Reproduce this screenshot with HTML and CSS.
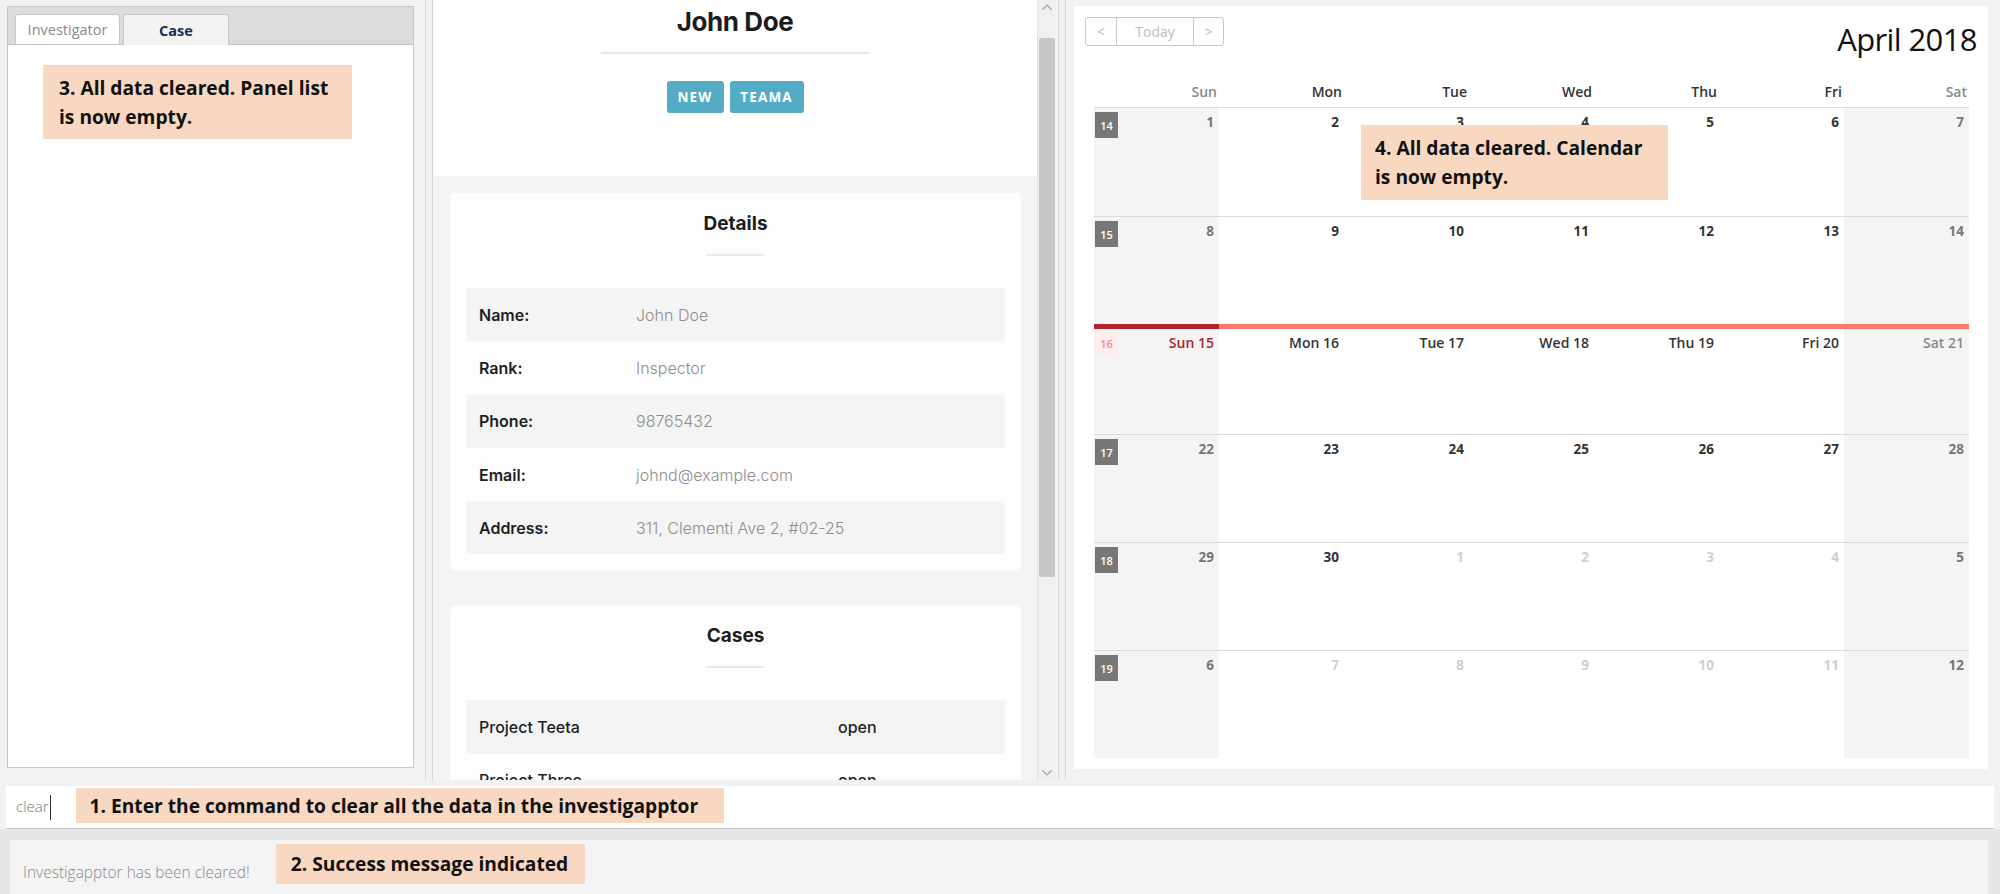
FILE: index.html
```html
<!DOCTYPE html>
<html lang="en">
<head>
<meta charset="utf-8">
<title>Investigapptor</title>
<link rel="stylesheet" href="styles.css">
</head>
<body>
<div class="app">
  <div class="main">
    <section class="left">
      <div class="tabs">
        <div class="tab">Investigator</div>
        <div class="tab active">Case</div>
      </div>
      <div class="list">
        <div class="note note-3">3. All data cleared. Panel list<br>is now empty.</div>
      </div>
    </section>
    <div class="split"></div>
    <section class="middle">
      <div class="detail">
        <header class="profile">
          <h1 class="name">John Doe</h1>
          <div class="rule"></div>
          <div class="tags"><span class="tag">NEW</span><span class="tag">TEAMA</span></div>
        </header>
        <div class="body">
          <div class="card">
            <h2 class="card-title">Details</h2>
            <div class="rule-sm"></div>
            <div class="rows">
              <div class="row"><span class="k">Name:</span><span class="v">John Doe</span></div>
              <div class="row"><span class="k">Rank:</span><span class="v">Inspector</span></div>
              <div class="row"><span class="k">Phone:</span><span class="v">98765432</span></div>
              <div class="row"><span class="k">Email:</span><span class="v">johnd@example.com</span></div>
              <div class="row"><span class="k">Address:</span><span class="v">311, Clementi Ave 2, #02-25</span></div>
            </div>
          </div>
          <div class="card">
            <h2 class="card-title">Cases</h2>
            <div class="rule-sm"></div>
            <div class="rows cases">
              <div class="row"><span class="k">Project Teeta</span><span class="s">open</span></div>
              <div class="row"><span class="k">Project Three</span><span class="s">open</span></div>
            </div>
          </div>
        </div>
      </div>
      <div class="scrollbar">
        <svg class="arrow" width="12" height="8" viewBox="0 0 12 8"><path d="M1.5 6.5 L6 2 L10.5 6.5" fill="none" stroke="#a0a0a0" stroke-width="1.2"/></svg>
        <div class="track"><div class="thumb"></div></div>
        <svg class="arrow" width="12" height="8" viewBox="0 0 12 8"><path d="M1.5 1.5 L6 6 L10.5 1.5" fill="none" stroke="#a0a0a0" stroke-width="1.2"/></svg>
      </div>
    </section>
    <div class="split split-2"></div>
    <section class="calendar">
      <div class="toolbar">
        <div class="nav">
          <span class="btn">&lt;</span><span class="btn today">Today</span><span class="btn">&gt;</span>
        </div>
        <div class="month">April 2018</div>
      </div>
      <div class="grid">
        <div class="dow">
          <span class="wk-end">Sun</span><span>Mon</span><span>Tue</span><span>Wed</span><span>Thu</span><span>Fri</span><span class="wk-end">Sat</span>
        </div>
        <div class="week">
          <div class="cell we"><span class="wn">14</span><span class="d">1</span></div>
          <div class="cell"><span class="d">2</span></div>
          <div class="cell"><span class="d">3</span></div>
          <div class="cell"><span class="d">4</span></div>
          <div class="cell"><span class="d">5</span></div>
          <div class="cell"><span class="d">6</span></div>
          <div class="cell we"><span class="d">7</span></div>
        </div>
        <div class="week">
          <div class="cell we"><span class="wn">15</span><span class="d">8</span></div>
          <div class="cell"><span class="d">9</span></div>
          <div class="cell"><span class="d">10</span></div>
          <div class="cell"><span class="d">11</span></div>
          <div class="cell"><span class="d">12</span></div>
          <div class="cell"><span class="d">13</span></div>
          <div class="cell we"><span class="d">14</span></div>
        </div>
        <div class="week current">
          <div class="cell we first"><span class="wn wn-now">16</span><span class="d today-d">Sun 15</span></div>
          <div class="cell"><span class="d">Mon 16</span></div>
          <div class="cell"><span class="d">Tue 17</span></div>
          <div class="cell"><span class="d">Wed 18</span></div>
          <div class="cell"><span class="d">Thu 19</span></div>
          <div class="cell"><span class="d">Fri 20</span></div>
          <div class="cell we"><span class="d">Sat 21</span></div>
        </div>
        <div class="week">
          <div class="cell we"><span class="wn">17</span><span class="d">22</span></div>
          <div class="cell"><span class="d">23</span></div>
          <div class="cell"><span class="d">24</span></div>
          <div class="cell"><span class="d">25</span></div>
          <div class="cell"><span class="d">26</span></div>
          <div class="cell"><span class="d">27</span></div>
          <div class="cell we"><span class="d">28</span></div>
        </div>
        <div class="week">
          <div class="cell we"><span class="wn">18</span><span class="d">29</span></div>
          <div class="cell"><span class="d">30</span></div>
          <div class="cell other"><span class="d">1</span></div>
          <div class="cell other"><span class="d">2</span></div>
          <div class="cell other"><span class="d">3</span></div>
          <div class="cell other"><span class="d">4</span></div>
          <div class="cell we"><span class="d">5</span></div>
        </div>
        <div class="week">
          <div class="cell we"><span class="wn">19</span><span class="d">6</span></div>
          <div class="cell other"><span class="d">7</span></div>
          <div class="cell other"><span class="d">8</span></div>
          <div class="cell other"><span class="d">9</span></div>
          <div class="cell other"><span class="d">10</span></div>
          <div class="cell other"><span class="d">11</span></div>
          <div class="cell we"><span class="d">12</span></div>
        </div>
      </div>
      <div class="note note-4">4. All data cleared. Calendar<br>is now empty.</div>
    </section>
  </div>
  <div class="command">
    <span class="cmd-text">clear</span><span class="caret"></span>
    <div class="note note-1">1. Enter the command to clear all the data in the investigapptor</div>
  </div>
  <div class="result">
    <div class="result-box">
      <span class="result-text">Investigapptor has been cleared!</span>
      <div class="note note-2">2. Success message indicated</div>
    </div>
  </div>
</div>
</body>
</html>
```

FILE: styles.css
```css
* { box-sizing: border-box; }
html, body { margin: 0; padding: 0; }
body {
  width: 2000px;
  height: 894px;
  overflow: hidden;
  background: #f2f2f2;
  font-family: "Open Sans", "Noto Sans", sans-serif;
  color: #333;
}
.app { display: flex; flex-direction: column; height: 894px; }
.main { display: flex; height: 780px; flex: none; }

/* annotations */
.note {
  background: #f8d8c1;
  color: #111;
  font-family: "Open Sans", sans-serif;
  font-weight: 700;
  font-size: 19.2px;
  line-height: 29px;
  white-space: nowrap;
}

/* left panel */
.left {
  margin: 6px 0 0 7px;
  width: 407px;
  height: 762px;
  border: 1px solid #c9c9c9;
  background: #fff;
  display: flex;
  flex-direction: column;
}
.tabs {
  height: 38px;
  background: #dcdcdc;
  border-bottom: 1px solid #c4c4c4;
  display: flex;
  align-items: flex-end;
  gap: 3px;
  padding-left: 7px;
}
.tab {
  width: 105px;
  height: 30px;
  background: #fff;
  border: 1px solid #c8c8c8;
  border-bottom: none;
  border-radius: 3px 3px 0 0;
  font-size: 14.5px;
  color: #8a8a8a;
  display: flex;
  align-items: center;
  justify-content: center;
}
.tab.active {
  width: 106px;
  height: 31px;
  margin-bottom: -1px;
  background: #f3f3f3;
  color: #142f5b;
  font-weight: 700;
}
.list { flex: 1; padding: 20px 0 0 35px; }
.note-3 { width: 309px; height: 74px; padding: 8px 16px; }

/* split dividers */
.split {
  width: 8px;
  margin-left: 11px;
  background: #f0f0f0;
  border-left: 1px solid #d6d6d6;
  border-right: 1px solid #d6d6d6;
}
.split-2 { margin-left: 2px; margin-right: 8px; }

/* middle detail */
.middle { width: 623px; height: 780px; display: flex; background: #fff; flex: none; }
.detail { width: 604px; height: 780px; overflow: hidden; background: #f4f4f4; font-family: "Inter", "Open Sans", sans-serif; }
.profile {
  background: #fff;
  height: 176px;
  padding-top: 6px;
  display: flex;
  flex-direction: column;
  align-items: center;
}
.name { margin: 0; font-size: 26px; line-height: 32px; font-weight: 700; color: #1c1c1c; letter-spacing: -0.4px; }
.rule { width: 268px; height: 2px; background: #e6e6e6; margin-top: 14px; }
.tags { display: flex; gap: 6px; margin-top: 27px; }
.tag {
  height: 32px;
  padding: 0 10px;
  background: #54abc5;
  border-radius: 3px;
  color: #fff;
  font-family: "Open Sans", sans-serif;
  font-weight: 700;
  font-size: 13.5px;
  letter-spacing: 1.2px;
  display: flex;
  align-items: center;
}
.tag:first-child { width: 57px; justify-content: center; }
.tag:last-child { width: 74px; justify-content: center; }
.body { padding: 17px 16px 0 17px; display: flex; flex-direction: column; gap: 34px; }
.card {
  background: #fdfdfd;
  border-radius: 5px;
  padding: 20px 16px 17px;
  display: flex;
  flex-direction: column;
  align-items: center;
}
.card-title { margin: 0; font-size: 19px; line-height: 22px; font-weight: 700; color: #1d1d1d; }
.rule-sm { width: 57px; height: 2px; background: #e9e9e9; margin-top: 19px; margin-bottom: 32px; }
.rows { width: 100%; }
.row { height: 53.3px; display: flex; align-items: center; padding-left: 13px; font-size: 16px; }
.row:nth-child(odd) { background: #f4f4f4; }
.k { width: 157px; font-weight: 600; color: #1e1e1e; }
.v { font-weight: 300; color: #8f8f8f; }
.cases .k { width: 359px; font-weight: 500; }
.s { font-weight: 500; color: #1e1e1e; }

/* scrollbar */
.scrollbar {
  width: 19px;
  background: #f0f0f0;
  border-left: 1px solid #e2e2e2;
  display: flex;
  flex-direction: column;
  align-items: center;
}
.arrow { flex: none; margin: 3px 0; }
.track { flex: 1; width: 100%; padding: 24px 1px 0; }
.thumb { height: 539px; background: #c6c6c6; border-radius: 2px; }

/* calendar */
.calendar {
  position: relative;
  margin-top: 6px;
  width: 914px;
  height: 763px;
  background: #fff;
  flex: none;
}
.toolbar {
  height: 69px;
  padding: 11px 11px 0;
  display: flex;
  justify-content: space-between;
  align-items: flex-start;
}
.nav {
  display: flex;
  height: 29px;
  border: 1px solid #c8c8c8;
  border-radius: 3px;
}
.btn {
  display: flex;
  align-items: center;
  justify-content: center;
  width: 30px;
  color: #bdbdbd;
  font-size: 14px;
}
.btn + .btn { border-left: 1px solid #c8c8c8; }
.btn.today { width: 77px; }
.month { font-size: 31px; line-height: 40px; margin-top: 2px; color: #111; font-weight: 400; letter-spacing: -0.6px; }
.grid { margin: 0 19px 0 20px; }
.dow {
  display: grid;
  grid-template-columns: repeat(7, 125px);
  height: 33px;
  align-items: center;
  border-bottom: 1px solid #dcdcdc;
  font-size: 14px;
  font-weight: 600;
  color: #333;
  text-align: right;
}
.dow span { padding-right: 2px; }
.dow .wk-end { color: #8a8a8a; }
.week {
  display: grid;
  grid-template-columns: repeat(7, 125px);
  height: 108px;
  border-top: 1px solid #dcdcdc;
}
.dow + .week { border-top: none; }
.week.current { height: 110px; border-top: 5px solid #fb7b6d; }
.cell { position: relative; text-align: right; padding: 2px 5px 0 0; }
.cell.we { background: #f4f4f4; }
.d { font-size: 13.5px; font-weight: 700; color: #333; line-height: 20px; }
.cell.we .d { color: #777; }
.cell.other .d { color: #cfcfcf; }
.current .d { font-size: 14px; font-weight: 600; }
.current .cell.we .d { color: #888; }
.current .cell.we .d.today-d { color: #b2222a; }
.current .first::before {
  content: "";
  position: absolute;
  left: 0;
  right: 0;
  top: -5px;
  height: 5px;
  background: #b2222a;
}
.wn {
  position: absolute;
  left: 1px;
  top: 4px;
  width: 23px;
  height: 26px;
  background: #777;
  color: #fff;
  font-size: 11px;
  font-weight: 600;
  display: flex;
  align-items: center;
  justify-content: center;
}
.wn.wn-now { background: #fdeeee; color: #f28c8c; top: 1px; }
.note-4 { position: absolute; left: 287px; top: 119px; width: 307px; height: 75px; padding: 8px 14px; }

/* command box */
.command {
  margin: 6px 0 0 6px;
  width: 1988px;
  height: 43px;
  background: #fff;
  border-bottom: 1px solid #c6c6c6;
  display: flex;
  align-items: flex-start;
  padding-left: 10px;
  flex: none;
}
.cmd-text { font-size: 15px; color: #777; margin-top: 10px; line-height: 20px; font-weight: 300; }
.caret { width: 1px; height: 25px; background: #333; margin: 9px 0 0 1px; }
.note-1 { margin: 2px 0 0 25px; width: 648px; height: 35px; padding: 3px 14px; }

/* result */
.result { flex: 1; background: #e6e6e6; padding: 11px 0 0 10px; }
.result-box {
  height: 100%;
  width: 1978px;
  background: #f4f4f4;
  display: flex;
  align-items: flex-start;
  padding-left: 13px;
}
.result-text { font-size: 15.5px; color: #8a8a8a; line-height: 20px; margin-top: 22px; font-weight: 300; }
.note-2 { margin: 4px 0 0 26px; width: 309px; height: 40px; padding: 5px 15px; }
```
